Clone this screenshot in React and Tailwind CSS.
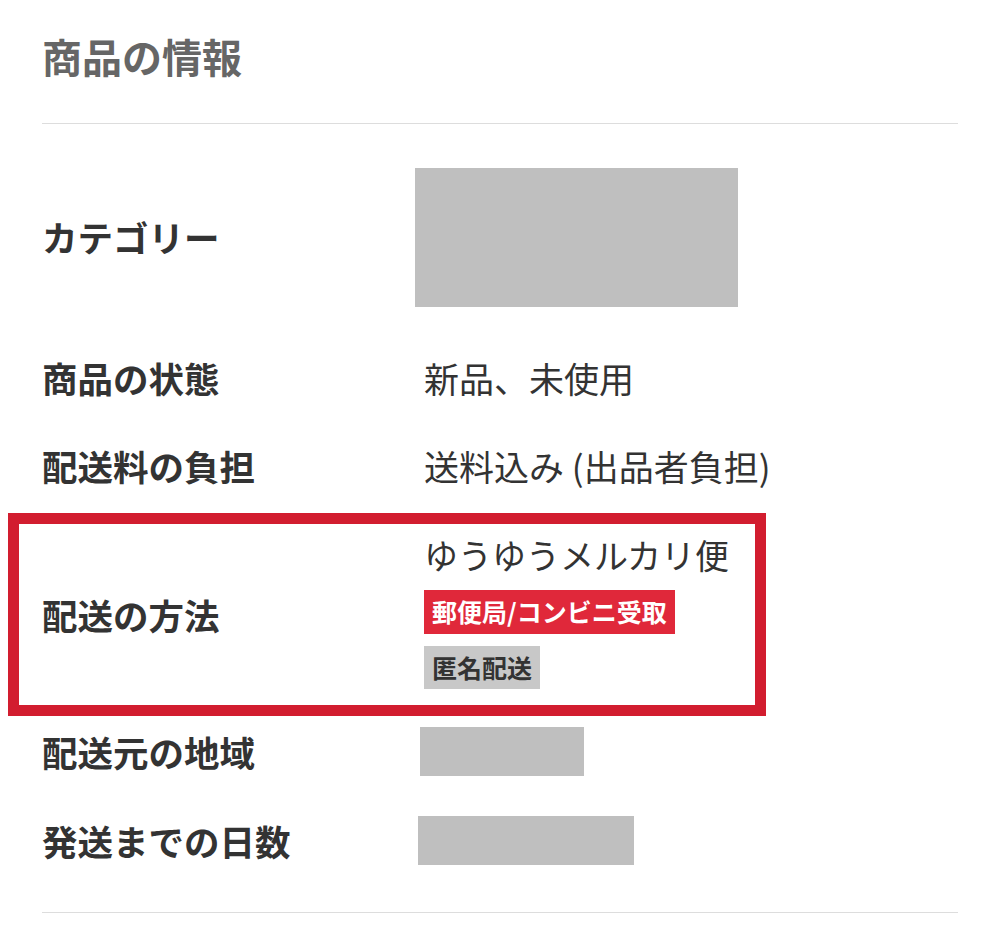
export default function App() {
  const font = { fontFamily: '"Noto Sans CJK JP", "Noto Sans", sans-serif' };
  return (
    <div className="w-[1000px] h-[942px] bg-white px-[42px] overflow-hidden" style={font}>
      <div className="pt-[36px] h-[123px]">
        <h1 className="text-[40px] leading-[40px] font-bold text-[#666666]">商品の情報</h1>
      </div>
      <div className="h-px bg-[#dddddd]" />

      <div className="flex items-center h-[226px]">
        <div className="w-[382px] text-[35.5px] font-bold text-[#333333]">カテゴリー</div>
        <div className="-ml-[9px] w-[323px] h-[139px] bg-[#bfbfbf]" />
      </div>

      <div className="flex items-center h-[56px]">
        <div className="w-[382px] text-[35.5px] font-bold text-[#333333]">商品の状態</div>
        <div className="text-[35px] text-[#333333]">新品、未使用</div>
      </div>

      <div className="flex items-center h-[56px] mt-[32px]">
        <div className="w-[382px] text-[35.5px] font-bold text-[#333333]">配送料の負担</div>
        <div className="text-[35px] text-[#333333]">送料込み (出品者負担)</div>
      </div>

      <div className="mt-[19px] -ml-[34px] w-[758px] h-[203px] border-[11px] border-[#d21d2f] pl-[23px] flex items-center">
        <div className="w-[382px] text-[35.5px] font-bold text-[#333333]">配送の方法</div>
        <div className="flex flex-col items-start pt-[11px] pb-[16px]">
          <div className="text-[34px] leading-[40px] text-[#333333]">ゆうゆうメルカリ便</div>
          <div className="mt-[15px] h-[44px] px-[8px] flex items-center bg-[#e0283a] text-white text-[25px] font-bold">郵便局/コンビニ受取</div>
          <div className="mt-[12px] h-[43px] px-[8px] flex items-center bg-[#c8c8c8] text-[#333333] text-[25px] font-bold">匿名配送</div>
        </div>
      </div>

      <div className="flex items-center h-[71px]">
        <div className="w-[382px] text-[35.5px] font-bold text-[#333333]">配送元の地域</div>
        <div className="-ml-[4px] w-[164px] h-[49px] bg-[#bfbfbf]" />
      </div>

      <div className="flex items-center h-[107px]">
        <div className="w-[382px] text-[35.5px] font-bold text-[#333333]">発送までの日数</div>
        <div className="-ml-[6px] w-[216px] h-[49px] bg-[#bfbfbf]" />
      </div>

      <div className="mt-[18px] h-px bg-[#dddddd]" />
    </div>
  );
}
